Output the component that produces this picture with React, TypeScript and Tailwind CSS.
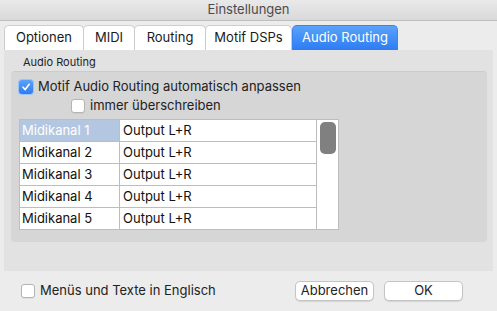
import React from "react";

const font = { fontFamily: 'Inter, "Liberation Sans", Arial, sans-serif' };

function Check({ checked }: { checked?: boolean }) {
  if (checked) {
    return (
      <div className="w-[14px] h-[14px] rounded-[3px] bg-gradient-to-b from-[#5aa2fb] to-[#2d7cf2] flex items-center justify-center shadow-[0_0_0_1px_#9cc3f7]">
        <svg width="10" height="10" viewBox="0 0 10 10">
          <path d="M2 5.2 L4.2 7.6 L8.2 2.3" fill="none" stroke="white" strokeWidth="1.6" strokeLinecap="round" strokeLinejoin="round" />
        </svg>
      </div>
    );
  }
  return <div className="w-[14px] h-[14px] rounded-[3px] bg-white border border-[#b4b4b4] shadow-[0_1px_0_rgba(0,0,0,0.05)]" />;
}

const tabs = [
  { label: "Optionen", w: 80 },
  { label: "MIDI", w: 52 },
  { label: "Routing", w: 72 },
  { label: "Motif DSPs", w: 87 },
];

export default function App() {
  const rows = [1, 2, 3, 4, 5];
  return (
    <div className="w-[497px] h-[311px] bg-[#ececec] overflow-hidden text-[13px] text-[#222]" style={font}>
      <div className="h-[21px] bg-gradient-to-b from-[#e9e9e9] to-[#d9d9d9] border-b border-[#bdbdbd] flex items-center justify-center text-[13px] text-[#4c4c4c]">
        Einstellungen
      </div>
      <div className="flex pl-[4px] pt-[4px] h-[29px]">
        {tabs.map((t) => (
          <div
            key={t.label}
            className="h-[25px] bg-white border border-b-0 border-[#cdcdcd] rounded-t-[5px] flex items-center justify-center mr-[-1px] text-[13px] text-[#1a1a1a]"
            style={{ width: t.w }}
          >
            {t.label}
          </div>
        ))}
        <div className="h-[25px] w-[106px] ml-[1px] rounded-t-[5px] bg-gradient-to-b from-[#5aa2fb] to-[#2c7cf3] border border-b-0 border-[#3b83ee] flex items-center justify-center text-white text-[13px]">
          Audio Routing
        </div>
      </div>
      <div className="ml-[4px] w-[489px] h-[221px] bg-[#e2e2e2] pt-[6px]">
        <div className="pl-[19px] text-[11px] leading-[13px] text-[#222] h-[15px]">Audio Routing</div>
        <div className="ml-[7px] w-[476px] h-[171px] bg-[#d6d6d6] rounded-[4px] border-t border-[#cbcbcb] pt-[6px] pl-[8px]">
          <div className="flex items-center h-[17px]">
            <Check checked />
            <span className="ml-[5px]">Motif Audio Routing automatisch anpassen</span>
          </div>
          <div className="flex items-center h-[17px] mt-[2px] pl-[52px]">
            <Check />
            <span className="ml-[5px]">immer überschreiben</span>
          </div>
          <div className="mt-[5px] w-[320px] h-[111px] bg-white border border-[#bdbdbd] flex">
            <div className="w-[297px] border-r border-[#bdbdbd]">
              {rows.map((r) => (
                <div key={r} className={"flex h-[22px] " + (r < 5 ? "border-b border-[#bdbdbd]" : "")}>
                  <div
                    className={
                      "w-[100px] border-r border-[#bdbdbd] pl-[2px] flex items-center " +
                      (r === 1 ? "bg-[#b3c7e1] text-white" : "text-[#111]")
                    }
                  >
                    Midikanal {r}
                  </div>
                  <div className="flex-1 pl-[3px] flex items-center text-[#111]">Output L+R</div>
                </div>
              ))}
            </div>
            <div className="flex-1 pt-[1px] flex justify-center">
              <div className="w-[16px] h-[32px] rounded-[5px] bg-[#808080] mt-[1px]" />
            </div>
          </div>
        </div>
      </div>
      <div className="flex items-center h-[40px] pl-[21px]">
        <Check />
        <span className="ml-[5px]">Menüs und Texte in Englisch</span>
        <div className="ml-auto flex mr-[34px]">
          <div className="w-[79px] h-[20px] bg-white border border-[#c4c4c4] rounded-[5px] flex items-center justify-center shadow-[0_1px_1px_rgba(0,0,0,0.1)]">
            Abbrechen
          </div>
          <div className="w-[79px] h-[20px] ml-[10px] bg-white border border-[#c4c4c4] rounded-[5px] flex items-center justify-center shadow-[0_1px_1px_rgba(0,0,0,0.1)]">
            OK
          </div>
        </div>
      </div>
    </div>
  );
}
